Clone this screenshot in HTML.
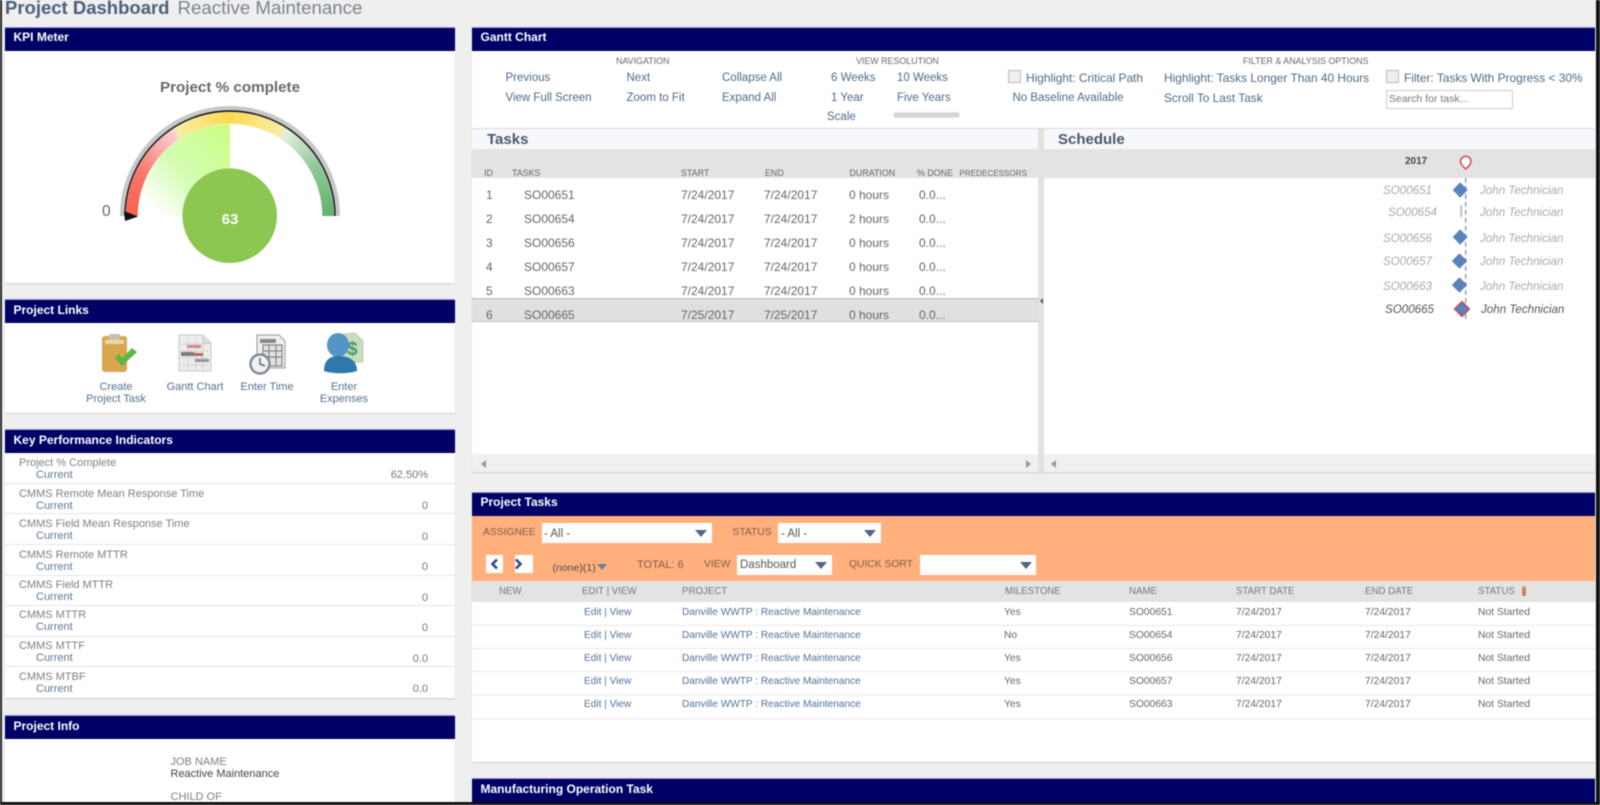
<!DOCTYPE html>
<html lang="en"><head><meta charset="utf-8"><title>Project Dashboard</title>
<style>
html,body{margin:0;padding:0;width:1600px;height:805px;overflow:hidden;background:#efefef;font-family:"Liberation Sans",sans-serif}
#p{position:relative;width:1600px;height:805px;overflow:hidden;filter:blur(.4px)}
#p div{position:absolute;white-space:nowrap}
.box{background:#fff;box-shadow:0 1px 1px #ccc}
.h{background:#000066;color:#fff;font-weight:bold;font-size:12px;line-height:19px;height:24px;border-top:1px solid #9a9ad0;box-sizing:border-box;padding-left:9px}
.h2{line-height:21px}
.t{font-size:11.5px;line-height:14px;height:14px;margin-top:1px}
.w{font-size:11.9px}
.n{color:#4d6a88}
.c{font-size:8.9px;line-height:12px;height:12px;color:#666}
.g{color:#666;font-size:12px;line-height:14px;height:14px}
.k{font-size:11px;line-height:12px;height:12px;color:#808080}
.ku{font-size:11px;line-height:12px;height:12px;color:#5d7896}
.kv{font-size:11px;line-height:12px;height:12px;color:#777;right:1172px}
.s{height:1px;background:#e6e6e6;left:5px;width:450px}
.lk{font-size:11px;line-height:12px;color:#567290;text-align:center;width:90px;height:12px}
.i{font-size:11.6px;font-style:italic;line-height:14px;height:14px;color:#aaa;margin-top:1px}
.sel{background:#fff}
.ar{width:0;height:0;border-left:6px solid transparent;border-right:6px solid transparent;border-top:7px solid #4f6487}
.o{font-size:10.3px;line-height:12px;height:12px;color:#7a6050;margin-top:1px}
.tc{font-size:10.3px;line-height:12px;height:12px;color:#666;margin-top:1px}
.tl{font-size:10.1px;line-height:12px;height:12px;color:#51709a;margin-top:1px}
.th{font-size:9.7px;line-height:12px;height:12px;color:#777;margin-top:1px}
.rs{left:472px;width:1123px;height:1px;background:#e8e8e8}
</style></head><body><div id="p">
<div style="left:0;top:0;width:2px;height:805px;background:#222"></div>

<div style="left:5px;top:-4px;font-size:18.5px;line-height:24px;font-weight:bold;color:#4c5f7c">Project Dashboard</div>
<div style="left:177.5px;top:-4px;font-size:18.7px;line-height:24px;color:#7b8490">Reactive Maintenance</div>

<!-- KPI meter -->
<div class="box" style="left:4.5px;top:27px;width:450.5px;height:256px"></div>
<div class="h" style="left:4.5px;top:26.5px;width:450.5px">KPI Meter</div>
<div style="left:100px;top:79px;width:260px;text-align:center;font-size:15.2px;line-height:18px;font-weight:bold;color:#696969">Project % complete</div>
<svg style="position:absolute;left:0;top:0" width="460" height="290">
<defs><linearGradient id="lg" x1="0" y1="1" x2="1" y2="0"><stop offset=".12" stop-color="#fff"/><stop offset=".48" stop-color="#d4fdb4"/><stop offset="1" stop-color="#ccfd80"/></linearGradient></defs>
<path d="M120 216A110 110 0 0 1 340 216L333 216A103 103 0 0 0 127 216Z" fill="#c9c6c6"/>
<path d="M230 216L138 216A92 92 0 0 1 230 124Z" fill="url(#lg)"/>
</svg>
<div style="left:126px;top:112px;width:208px;height:104px;overflow:hidden"><div style="left:0;top:0;width:208px;height:208px;border-radius:50%;background:conic-gradient(from 270deg,#f9614f 0deg,#f9766a 26deg,#fbd0d2 56deg,#f8eda2 58deg,#fdd94f 90deg,#f8eea4 121deg,#e2efdd 124deg,#92c89a 150deg,#60b26c 180deg,#60b26c 360deg);-webkit-mask:radial-gradient(circle,transparent 92px,#000 92.5px);mask:radial-gradient(circle,transparent 92px,#000 92.5px)"></div></div>
<svg style="position:absolute;left:0;top:0" width="460" height="290">
<path d="M125 216A105 105 0 0 1 335 216" fill="none" stroke="#111" stroke-width="1.4"/>
<path d="M124 211L138 216.5L125 221Z" fill="#111"/>
<circle cx="229.7" cy="215.7" r="47.3" fill="#8bc751"/>
</svg>
<div style="left:102px;top:203px;font-size:15.5px;line-height:18px;color:#666">0</div>
<div style="left:200px;top:211px;width:60px;text-align:center;font-size:15px;line-height:18px;font-weight:bold;color:#fff">63</div>

<!-- Project Links -->
<div class="box" style="left:4.5px;top:300px;width:450.5px;height:113px"></div>
<div class="h h2" style="left:4.5px;top:299px;width:450.5px">Project Links</div>
<svg style="position:absolute;left:95px;top:330px" width="280" height="50">
<!-- clipboard -->
<rect x="7" y="6" width="25" height="36" rx="3" fill="#d9a650"/>
<rect x="10" y="10" width="19" height="4" fill="#edd6a8"/>
<rect x="14" y="4" width="11" height="6" rx="1" fill="#c9c2b0"/>
<path d="M20 28L27 36L42 22L37 18L27 28L24 24Z" fill="#58b842"/>
<!-- gantt -->
<path d="M84 5H108L116 13V41H84Z" fill="#ececec" stroke="#c8c8c8"/>
<path d="M108 5V13H116" fill="#ddd" stroke="#c8c8c8"/>
<path d="M86 14H113M86 21H113M86 28H113M86 35H113M93 9V40M101 9V40M108 14V40" stroke="#d8d0d0" fill="none"/>
<rect x="92" y="15" width="14" height="3" fill="#c98f84"/>
<rect x="86" y="22" width="13" height="4" fill="#7d7d7d"/>
<rect x="99" y="23" width="9" height="3" fill="#b36a5e"/>
<rect x="100" y="29" width="14" height="3" fill="#8a9a98"/>
<!-- time -->
<path d="M162 5H184L190 11V38H162Z" fill="#eee" stroke="#999"/>
<path d="M165 9H181V13H165Z" fill="#888"/>
<path d="M168 15H187V36H168Z" fill="#dfe2df" stroke="#777"/>
<path d="M174 15V36M181 15V36M168 21H187M168 27H187" stroke="#777" fill="none"/>
<circle cx="165" cy="34" r="9.5" fill="#eef2f5" stroke="#7f8a94" stroke-width="2.4"/>
<path d="M165 28V34L170 36" fill="none" stroke="#555" stroke-width="1.3"/>
<!-- expenses -->
<path d="M248 4L260 3L268 11V32L248 33Z" fill="#c8dcc0" stroke="#bcd2ae"/>
<text x="252" y="25" font-family="Liberation Sans" font-weight="bold" font-size="19" fill="#4a9a6a">$</text>
<ellipse cx="243" cy="15" rx="11" ry="12" fill="#5595c5"/>
<path d="M229 41C229 30 235 26 243 26C254 26 262 30 262 41C252 44 238 44 229 41Z" fill="#2f78ad"/>
</svg>
<div class="lk" style="left:71px;top:381px">Create</div>
<div class="lk" style="left:71px;top:393px">Project Task</div>
<div class="lk" style="left:150px;top:381px">Gantt Chart</div>
<div class="lk" style="left:222px;top:381px">Enter Time</div>
<div class="lk" style="left:299px;top:381px">Enter</div>
<div class="lk" style="left:299px;top:393px">Expenses</div>

<!-- KPIs -->
<div class="box" style="left:4.5px;top:430px;width:450.5px;height:268px"></div>
<div class="h h2" style="left:4.5px;top:429px;width:450.5px">Key Performance Indicators</div>
<div class="k" style="left:19px;top:457px">Project % Complete</div><div class="ku" style="left:36px;top:469px">Current</div><div class="kv" style="top:469px">62.50%</div>
<div class="s" style="top:483px"></div>
<div class="k" style="left:19px;top:488px">CMMS Remote Mean Response Time</div><div class="ku" style="left:36px;top:500px">Current</div><div class="kv" style="top:500px">0</div>
<div class="s" style="top:513px"></div>
<div class="k" style="left:19px;top:518px">CMMS Field Mean Response Time</div><div class="ku" style="left:36px;top:530px">Current</div><div class="kv" style="top:531px">0</div>
<div class="s" style="top:544px"></div>
<div class="k" style="left:19px;top:548.5px">CMMS Remote MTTR</div><div class="ku" style="left:36px;top:560.500px">Current</div><div class="kv" style="top:561px">0</div>
<div class="s" style="top:575px"></div>
<div class="k" style="left:19px;top:579px">CMMS Field MTTR</div><div class="ku" style="left:36px;top:591px">Current</div><div class="kv" style="top:592px">0</div>
<div class="s" style="top:605px"></div>
<div class="k" style="left:19px;top:609px">CMMS MTTR</div><div class="ku" style="left:36px;top:621px">Current</div><div class="kv" style="top:622px">0</div>
<div class="s" style="top:636px"></div>
<div class="k" style="left:19px;top:640px">CMMS MTTF</div><div class="ku" style="left:36px;top:652px">Current</div><div class="kv" style="top:653px">0.0</div>
<div class="s" style="top:666px"></div>
<div class="k" style="left:19px;top:670.5px">CMMS MTBF</div><div class="ku" style="left:36px;top:682.5px">Current</div><div class="kv" style="top:683px">0.0</div>

<!-- Project info -->
<div class="box" style="left:4.5px;top:716px;width:450.5px;height:90px"></div>
<div class="h h2" style="left:4.5px;top:714.5px;width:450.5px">Project Info</div>
<div class="k" style="left:170.5px;top:755.5px">JOB NAME</div>
<div class="k" style="left:170.5px;top:767.5px;color:#444">Reactive Maintenance</div>
<div class="k" style="left:170.5px;top:790.5px">CHILD OF</div>

<!-- Gantt -->
<div class="box" style="left:471.5px;top:27px;width:1123.5px;height:445px"></div>
<div class="h" style="left:471.5px;top:27px;width:1123.5px">Gantt Chart</div>
<div class="c" style="left:616px;top:54.5px">NAVIGATION</div>
<div class="c" style="left:856px;top:54.5px">VIEW RESOLUTION</div>
<div class="c" style="left:1243px;top:54.5px">FILTER &amp; ANALYSIS OPTIONS</div>
<div class="t n" style="left:505.5px;top:70px">Previous</div>
<div class="t n" style="left:626.5px;top:70px">Next</div>
<div class="t n" style="left:722px;top:70px">Collapse All</div>
<div class="t n" style="left:831px;top:70px">6 Weeks</div>
<div class="t n" style="left:897px;top:70px">10 Weeks</div>
<div style="left:1008px;top:70px;width:11px;height:11px;background:#eee;border:1px solid #bbb"></div>
<div class="t n w" style="left:1026px;top:70px">Highlight: Critical Path</div>
<div class="t n w" style="left:1164px;top:70px">Highlight: Tasks Longer Than 40 Hours</div>
<div style="left:1386px;top:70px;width:11px;height:11px;background:#eee;border:1px solid #bbb"></div>
<div class="t n w" style="left:1404px;top:70px">Filter: Tasks With Progress &lt; 30%</div>
<div class="t n" style="left:505.5px;top:90px">View Full Screen</div>
<div class="t n" style="left:626.5px;top:90px">Zoom to Fit</div>
<div class="t n" style="left:722px;top:90px">Expand All</div>
<div class="t n" style="left:831px;top:90px">1 Year</div>
<div class="t n" style="left:897px;top:90px">Five Years</div>
<div class="t n" style="left:1012.5px;top:90px">No Baseline Available</div>
<div class="t n w" style="left:1164px;top:90px">Scroll To Last Task</div>
<div class="t n" style="left:827px;top:109px">Scale</div>
<div style="left:893px;top:112px;width:65px;height:4px;background:#d4d4d4;border:1px solid #e2e2e2;border-radius:3px"></div>
<div style="left:1386px;top:90px;height:17px;border:1px solid #ccc;background:#fff;font-size:10.5px;line-height:17px;color:#777;padding-left:2px;width:123px;overflow:hidden">Search for task...</div>

<div style="left:472px;top:128px;width:1123px;height:1px;background:#d9d9d9"></div>
<div style="left:472px;top:129px;width:1123px;height:20px;background:#f6f8fb"></div>
<div style="left:487px;top:131px;font-size:15px;line-height:18px;font-weight:bold;color:#4a5670">Tasks</div>
<div style="left:1058px;top:131px;font-size:15px;line-height:18px;font-weight:bold;color:#4a5670">Schedule</div>
<div style="left:472px;top:149px;width:1123px;height:29px;background:#e3e3e3"></div>
<div class="c" style="left:484px;top:167px">ID</div>
<div class="c" style="left:512px;top:167px">TASKS</div>
<div class="c" style="left:681px;top:167px">START</div>
<div class="c" style="left:765px;top:167px">END</div>
<div class="c" style="left:849.5px;top:167px">DURATION</div>
<div class="c" style="left:917px;top:167px">% DONE</div>
<div class="c" style="left:959.5px;top:167.5px;font-size:8.1px">PREDECESSORS</div>
<div style="left:1405px;top:155.5px;font-size:10px;line-height:12px;font-weight:bold;color:#444">2017</div>

<div style="left:472px;top:298px;width:566px;height:24px;background:#e0e0e0;border-top:1px dotted #999;border-bottom:1px dotted #aaa;box-sizing:border-box"></div>
<div style="left:1038px;top:129px;width:6px;height:343px;background:#e2e2e2"></div>
<div style="left:1040px;top:298px;width:0;height:0;border-top:3px solid transparent;border-bottom:3px solid transparent;border-right:3px solid #555"></div>

<div class="g" style="left:486px;top:188px">1</div><div class="g" style="left:524px;top:188px">SO00651</div><div class="g" style="left:681px;top:188px">7/24/2017</div><div class="g" style="left:764px;top:188px">7/24/2017</div><div class="g" style="left:849px;top:188px">0 hours</div><div class="g" style="left:919px;top:188px">0.0...</div>
<div class="g" style="left:486px;top:212px">2</div><div class="g" style="left:524px;top:212px">SO00654</div><div class="g" style="left:681px;top:212px">7/24/2017</div><div class="g" style="left:764px;top:212px">7/24/2017</div><div class="g" style="left:849px;top:212px">2 hours</div><div class="g" style="left:919px;top:212px">0.0...</div>
<div class="g" style="left:486px;top:236px">3</div><div class="g" style="left:524px;top:236px">SO00656</div><div class="g" style="left:681px;top:236px">7/24/2017</div><div class="g" style="left:764px;top:236px">7/24/2017</div><div class="g" style="left:849px;top:236px">0 hours</div><div class="g" style="left:919px;top:236px">0.0...</div>
<div class="g" style="left:486px;top:260px">4</div><div class="g" style="left:524px;top:260px">SO00657</div><div class="g" style="left:681px;top:260px">7/24/2017</div><div class="g" style="left:764px;top:260px">7/24/2017</div><div class="g" style="left:849px;top:260px">0 hours</div><div class="g" style="left:919px;top:260px">0.0...</div>
<div class="g" style="left:486px;top:284px">5</div><div class="g" style="left:524px;top:284px">SO00663</div><div class="g" style="left:681px;top:284px">7/24/2017</div><div class="g" style="left:764px;top:284px">7/24/2017</div><div class="g" style="left:849px;top:284px">0 hours</div><div class="g" style="left:919px;top:284px">0.0...</div>
<div class="g" style="left:486px;top:308px">6</div><div class="g" style="left:524px;top:308px">SO00665</div><div class="g" style="left:681px;top:308px">7/25/2017</div><div class="g" style="left:764px;top:308px">7/25/2017</div><div class="g" style="left:849px;top:308px">0 hours</div><div class="g" style="left:919px;top:308px">0.0...</div>

<div class="i" style="left:1383px;top:183px">SO00651</div><div class="i" style="left:1480px;top:183px">John Technician</div>
<div class="i" style="left:1388px;top:205px">SO00654</div><div class="i" style="left:1480px;top:205px">John Technician</div>
<div class="i" style="left:1383px;top:231px">SO00656</div><div class="i" style="left:1480px;top:231px">John Technician</div>
<div class="i" style="left:1383px;top:254px">SO00657</div><div class="i" style="left:1480px;top:254px">John Technician</div>
<div class="i" style="left:1383px;top:279px">SO00663</div><div class="i" style="left:1480px;top:279px">John Technician</div>
<div class="i" style="left:1385px;top:302px;color:#555">SO00665</div><div class="i" style="left:1481px;top:302px;color:#555">John Technician</div>

<svg style="position:absolute;left:1440px;top:150px" width="50" height="180">
<path d="M25.7 28V172" stroke="#8b9fc0" stroke-width="1.4" stroke-dasharray="5 3" fill="none"/>
<path d="M25.7 19C22.5 16 20.5 14 20.5 11.5A5.2 5.2 0 0 1 31 11.5C31 14 29 16 25.7 19Z" fill="#fff" stroke="#d4475a" stroke-width="1.5"/>
<g fill="#5b82bd" stroke="#5b82bd" stroke-linejoin="round">
<path d="M20.2 33L27 40L20.2 47L13.4 40Z"/>
<path d="M20.2 80L27 87L20.2 94L13.4 87Z"/>
<path d="M19.5 104L26.5 111L19.5 118L12.5 111Z"/>
<path d="M19.5 128L26.5 135L19.5 142L12.5 135Z"/>
</g>
<rect x="20" y="55" width="2.5" height="12" fill="#ccc"/>
<path d="M22 151.5L29.5 159L22 166.5L14.5 159Z" fill="#5b82bd" stroke="#c9504f" stroke-width="1.5" stroke-linejoin="round"/>
</svg>

<div style="left:472px;top:454px;width:566px;height:18px;background:#f0f0f0"></div>
<div style="left:1044px;top:454px;width:551px;height:18px;background:#f0f0f0"></div>
<div style="left:481px;top:460px;border-top:4px solid transparent;border-bottom:4px solid transparent;border-right:5px solid #999"></div>
<div style="left:1026px;top:460px;border-top:4px solid transparent;border-bottom:4px solid transparent;border-left:5px solid #999"></div>
<div style="left:1051px;top:460px;border-top:4px solid transparent;border-bottom:4px solid transparent;border-right:5px solid #999"></div>

<!-- Project Tasks -->
<div class="box" style="left:471.5px;top:492px;width:1123.5px;height:270px"></div>
<div class="h" style="left:471.5px;top:491.5px;width:1123.5px">Project Tasks</div>
<div style="left:471.5px;top:516px;width:1123.5px;height:65px;background:#ffb07d"></div>
<div class="o" style="left:483px;top:526px">ASSIGNEE</div>
<div class="sel" style="left:541.5px;top:523px;width:170.5px;height:20px"></div>
<div style="left:544px;top:527px;font-size:11.5px;line-height:14px;color:#555">- All -</div>
<div class="ar" style="left:695px;top:530px"></div>
<div class="o" style="left:732.5px;top:526px">STATUS</div>
<div class="sel" style="left:778px;top:523px;width:103px;height:20px"></div>
<div style="left:781px;top:527px;font-size:11.5px;line-height:14px;color:#555">- All -</div>
<div class="ar" style="left:864px;top:530px"></div>
<div class="sel" style="left:486px;top:555px;width:17px;height:18px"></div>
<div class="sel" style="left:515px;top:555px;width:18px;height:18px"></div>
<svg style="position:absolute;left:486px;top:555px" width="48" height="18"><path d="M11 4.5L6.5 9L11 13.5M30 4.5L34.5 9L30 13.5" fill="none" stroke="#2a4a80" stroke-width="2.6"/></svg>
<div style="left:552.5px;top:562px;font-size:10.5px;line-height:12px;color:#5a4a44">(none)(1)</div>
<div style="left:597px;top:564px;width:0;height:0;border-left:5px solid transparent;border-right:5px solid transparent;border-top:6px solid #6b7c9c"></div>
<div class="o" style="left:637px;top:558px;font-size:11px">TOTAL: 6</div>
<div class="o" style="left:704px;top:558px">VIEW</div>
<div class="sel" style="left:737px;top:555px;width:95px;height:20px"></div>
<div style="left:740px;top:558px;font-size:11.5px;line-height:14px;color:#555">Dashboard</div>
<div class="ar" style="left:815px;top:562px"></div>
<div class="o" style="left:849px;top:558px">QUICK SORT</div>
<div class="sel" style="left:920px;top:555px;width:116px;height:20px"></div>
<div class="ar" style="left:1020px;top:562px"></div>

<div style="left:472px;top:581px;width:1123px;height:21px;background:#e3e3e3"></div>
<div class="th" style="left:499px;top:585px">NEW</div>
<div class="th" style="left:582px;top:585px">EDIT | VIEW</div>
<div class="th" style="left:682px;top:585px">PROJECT</div>
<div class="th" style="left:1005px;top:585px">MILESTONE</div>
<div class="th" style="left:1129px;top:585px">NAME</div>
<div class="th" style="left:1236px;top:585px">START DATE</div>
<div class="th" style="left:1365px;top:585px">END DATE</div>
<div class="th" style="left:1478px;top:585px">STATUS</div>
<div style="left:1522px;top:586px;width:4px;height:10px;border-radius:2px;background:linear-gradient(#d9a050,#c76a6a)"></div>

<div class="tl" style="left:584px;top:606px">Edit | View</div><div class="tl" style="left:682px;top:606px">Danville WWTP : Reactive Maintenance</div><div class="tc" style="left:1004px;top:606px">Yes</div><div class="tc" style="left:1129px;top:606px">SO00651</div><div class="tc" style="left:1236px;top:606px">7/24/2017</div><div class="tc" style="left:1365px;top:606px">7/24/2017</div><div class="tc" style="left:1478px;top:606px">Not Started</div>
<div class="rs" style="top:625px"></div>
<div class="tl" style="left:584px;top:629px">Edit | View</div><div class="tl" style="left:682px;top:629px">Danville WWTP : Reactive Maintenance</div><div class="tc" style="left:1004px;top:629px">No</div><div class="tc" style="left:1129px;top:629px">SO00654</div><div class="tc" style="left:1236px;top:629px">7/24/2017</div><div class="tc" style="left:1365px;top:629px">7/24/2017</div><div class="tc" style="left:1478px;top:629px">Not Started</div>
<div class="rs" style="top:648px"></div>
<div class="tl" style="left:584px;top:652px">Edit | View</div><div class="tl" style="left:682px;top:652px">Danville WWTP : Reactive Maintenance</div><div class="tc" style="left:1004px;top:652px">Yes</div><div class="tc" style="left:1129px;top:652px">SO00656</div><div class="tc" style="left:1236px;top:652px">7/24/2017</div><div class="tc" style="left:1365px;top:652px">7/24/2017</div><div class="tc" style="left:1478px;top:652px">Not Started</div>
<div class="rs" style="top:671px"></div>
<div class="tl" style="left:584px;top:675px">Edit | View</div><div class="tl" style="left:682px;top:675px">Danville WWTP : Reactive Maintenance</div><div class="tc" style="left:1004px;top:675px">Yes</div><div class="tc" style="left:1129px;top:675px">SO00657</div><div class="tc" style="left:1236px;top:675px">7/24/2017</div><div class="tc" style="left:1365px;top:675px">7/24/2017</div><div class="tc" style="left:1478px;top:675px">Not Started</div>
<div class="rs" style="top:694px"></div>
<div class="tl" style="left:584px;top:698px">Edit | View</div><div class="tl" style="left:682px;top:698px">Danville WWTP : Reactive Maintenance</div><div class="tc" style="left:1004px;top:698px">Yes</div><div class="tc" style="left:1129px;top:698px">SO00663</div><div class="tc" style="left:1236px;top:698px">7/24/2017</div><div class="tc" style="left:1365px;top:698px">7/24/2017</div><div class="tc" style="left:1478px;top:698px">Not Started</div>
<div class="rs" style="top:718px"></div>

<!-- Manufacturing -->
<div class="h h2" style="left:471.5px;top:778px;width:1123.5px">Manufacturing Operation Task</div>

<div style="left:0;top:802px;width:1600px;height:3px;background:#111"></div>
<div style="left:1595.5px;top:0;width:4.5px;height:805px;background:#111"></div>
</div></body></html>
